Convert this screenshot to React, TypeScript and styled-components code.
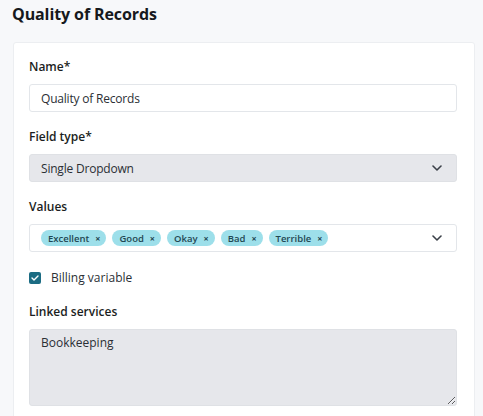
import React from 'react';
import styled, { createGlobalStyle } from 'styled-components';

const GlobalStyle = createGlobalStyle`
  body {
    margin: 0;
    background: #f7f8fa;
    font-family: "Open Sans", "Liberation Sans", sans-serif;
    color: #1f2328;
  }
`;

const Page = styled.div`
  height: 416px;
  overflow: hidden;
  padding: 0 8px 0 13px;
`;

const Title = styled.h1`
  margin: 0 0 0 -1px;
  padding-top: 3px;
  height: 39px;
  font-size: 16px;
  font-weight: 700;
  color: #16191d;
  letter-spacing: -0.1px;
`;

const Card = styled.div`
  background: #fff;
  border: 1px solid #eceef1;
  border-radius: 3px;
  padding: 16px 17px 20px 15px;
  display: flex;
  flex-direction: column;
`;

const Field = styled.div`
  display: flex;
  flex-direction: column;
  margin-bottom: 17px;
`;

const Label = styled.label`
  font-size: 12px;
  font-weight: 600;
  line-height: 16px;
  margin-bottom: 9px;
  color: #1b1e22;
`;

const Box = styled.div<{ $disabled?: boolean }>`
  height: 28px;
  box-sizing: border-box;
  display: flex;
  align-items: center;
  padding: 0 14px 0 11px;
  border: 1px solid ${(p) => (p.$disabled ? '#dfe1e5' : '#e3e6ea')};
  border-radius: 3px;
  background: ${(p) => (p.$disabled ? '#e6e7eb' : '#fff')};
  font-size: 12px;
  letter-spacing: -0.2px;
  color: #2b2f35;
`;

const Grow = styled.div`
  flex: 1;
  display: flex;
  gap: 6px;
  align-items: center;
`;

const Tag = styled.span`
  display: inline-flex;
  align-items: center;
  height: 16px;
  padding: 0 6px 0 7px;
  border-radius: 8px;
  background: #9ddfea;
  color: #1f4752;
  font-size: 9.5px;
  font-weight: 600;
  letter-spacing: 0;
  gap: 6px;
`;

const X = styled.span`
  font-size: 9px;
  font-weight: 700;
`;

const CheckRow = styled.div`
  display: flex;
  align-items: center;
  gap: 10px;
  margin: 0 0 18px;
  font-size: 12px;
  color: #2b2f35;
`;

const Check = styled.span`
  width: 12px;
  height: 12px;
  border-radius: 2px;
  background: #1b6c83;
  display: flex;
  align-items: center;
  justify-content: center;
`;

const Area = styled.textarea`
  height: 77px;
  box-sizing: border-box;
  resize: vertical;
  border: 1px solid #dfe1e5;
  border-radius: 3px;
  background: #e6e7eb;
  padding: 4px 11px;
  font-family: inherit;
  font-size: 12px;
  color: #2b2f35;
`;

const Chevron = () => (
  <svg width="10" height="6" viewBox="0 0 10 6" fill="none">
    <path d="M1 1l4 4 4-4" stroke="#3b4048" strokeWidth="1.6" strokeLinecap="round" strokeLinejoin="round" />
  </svg>
);

const values = ['Excellent', 'Good', 'Okay', 'Bad', 'Terrible'];

const App = () => {
  return (
    <Page>
      <GlobalStyle />
      <Title>Quality of Records</Title>
      <Card>
        <Field>
          <Label>Name*</Label>
          <Box>Quality of Records</Box>
        </Field>
        <Field>
          <Label>Field type*</Label>
          <Box $disabled>
            <Grow>Single Dropdown</Grow>
            <Chevron />
          </Box>
        </Field>
        <Field>
          <Label>Values</Label>
          <Box>
            <Grow>
              {values.map((v) => (
                <Tag key={v}>
                  {v}
                  <X>×</X>
                </Tag>
              ))}
            </Grow>
            <Chevron />
          </Box>
        </Field>
        <CheckRow>
          <Check>
            <svg width="8" height="6" viewBox="0 0 8 6" fill="none">
              <path d="M1 3l2 2 4-4" stroke="#fff" strokeWidth="1.4" strokeLinecap="round" strokeLinejoin="round" />
            </svg>
          </Check>
          Billing variable
        </CheckRow>
        <Field>
          <Label>Linked services</Label>
          <Area readOnly defaultValue="Bookkeeping" />
        </Field>
      </Card>
    </Page>
  );
};

export default App;
